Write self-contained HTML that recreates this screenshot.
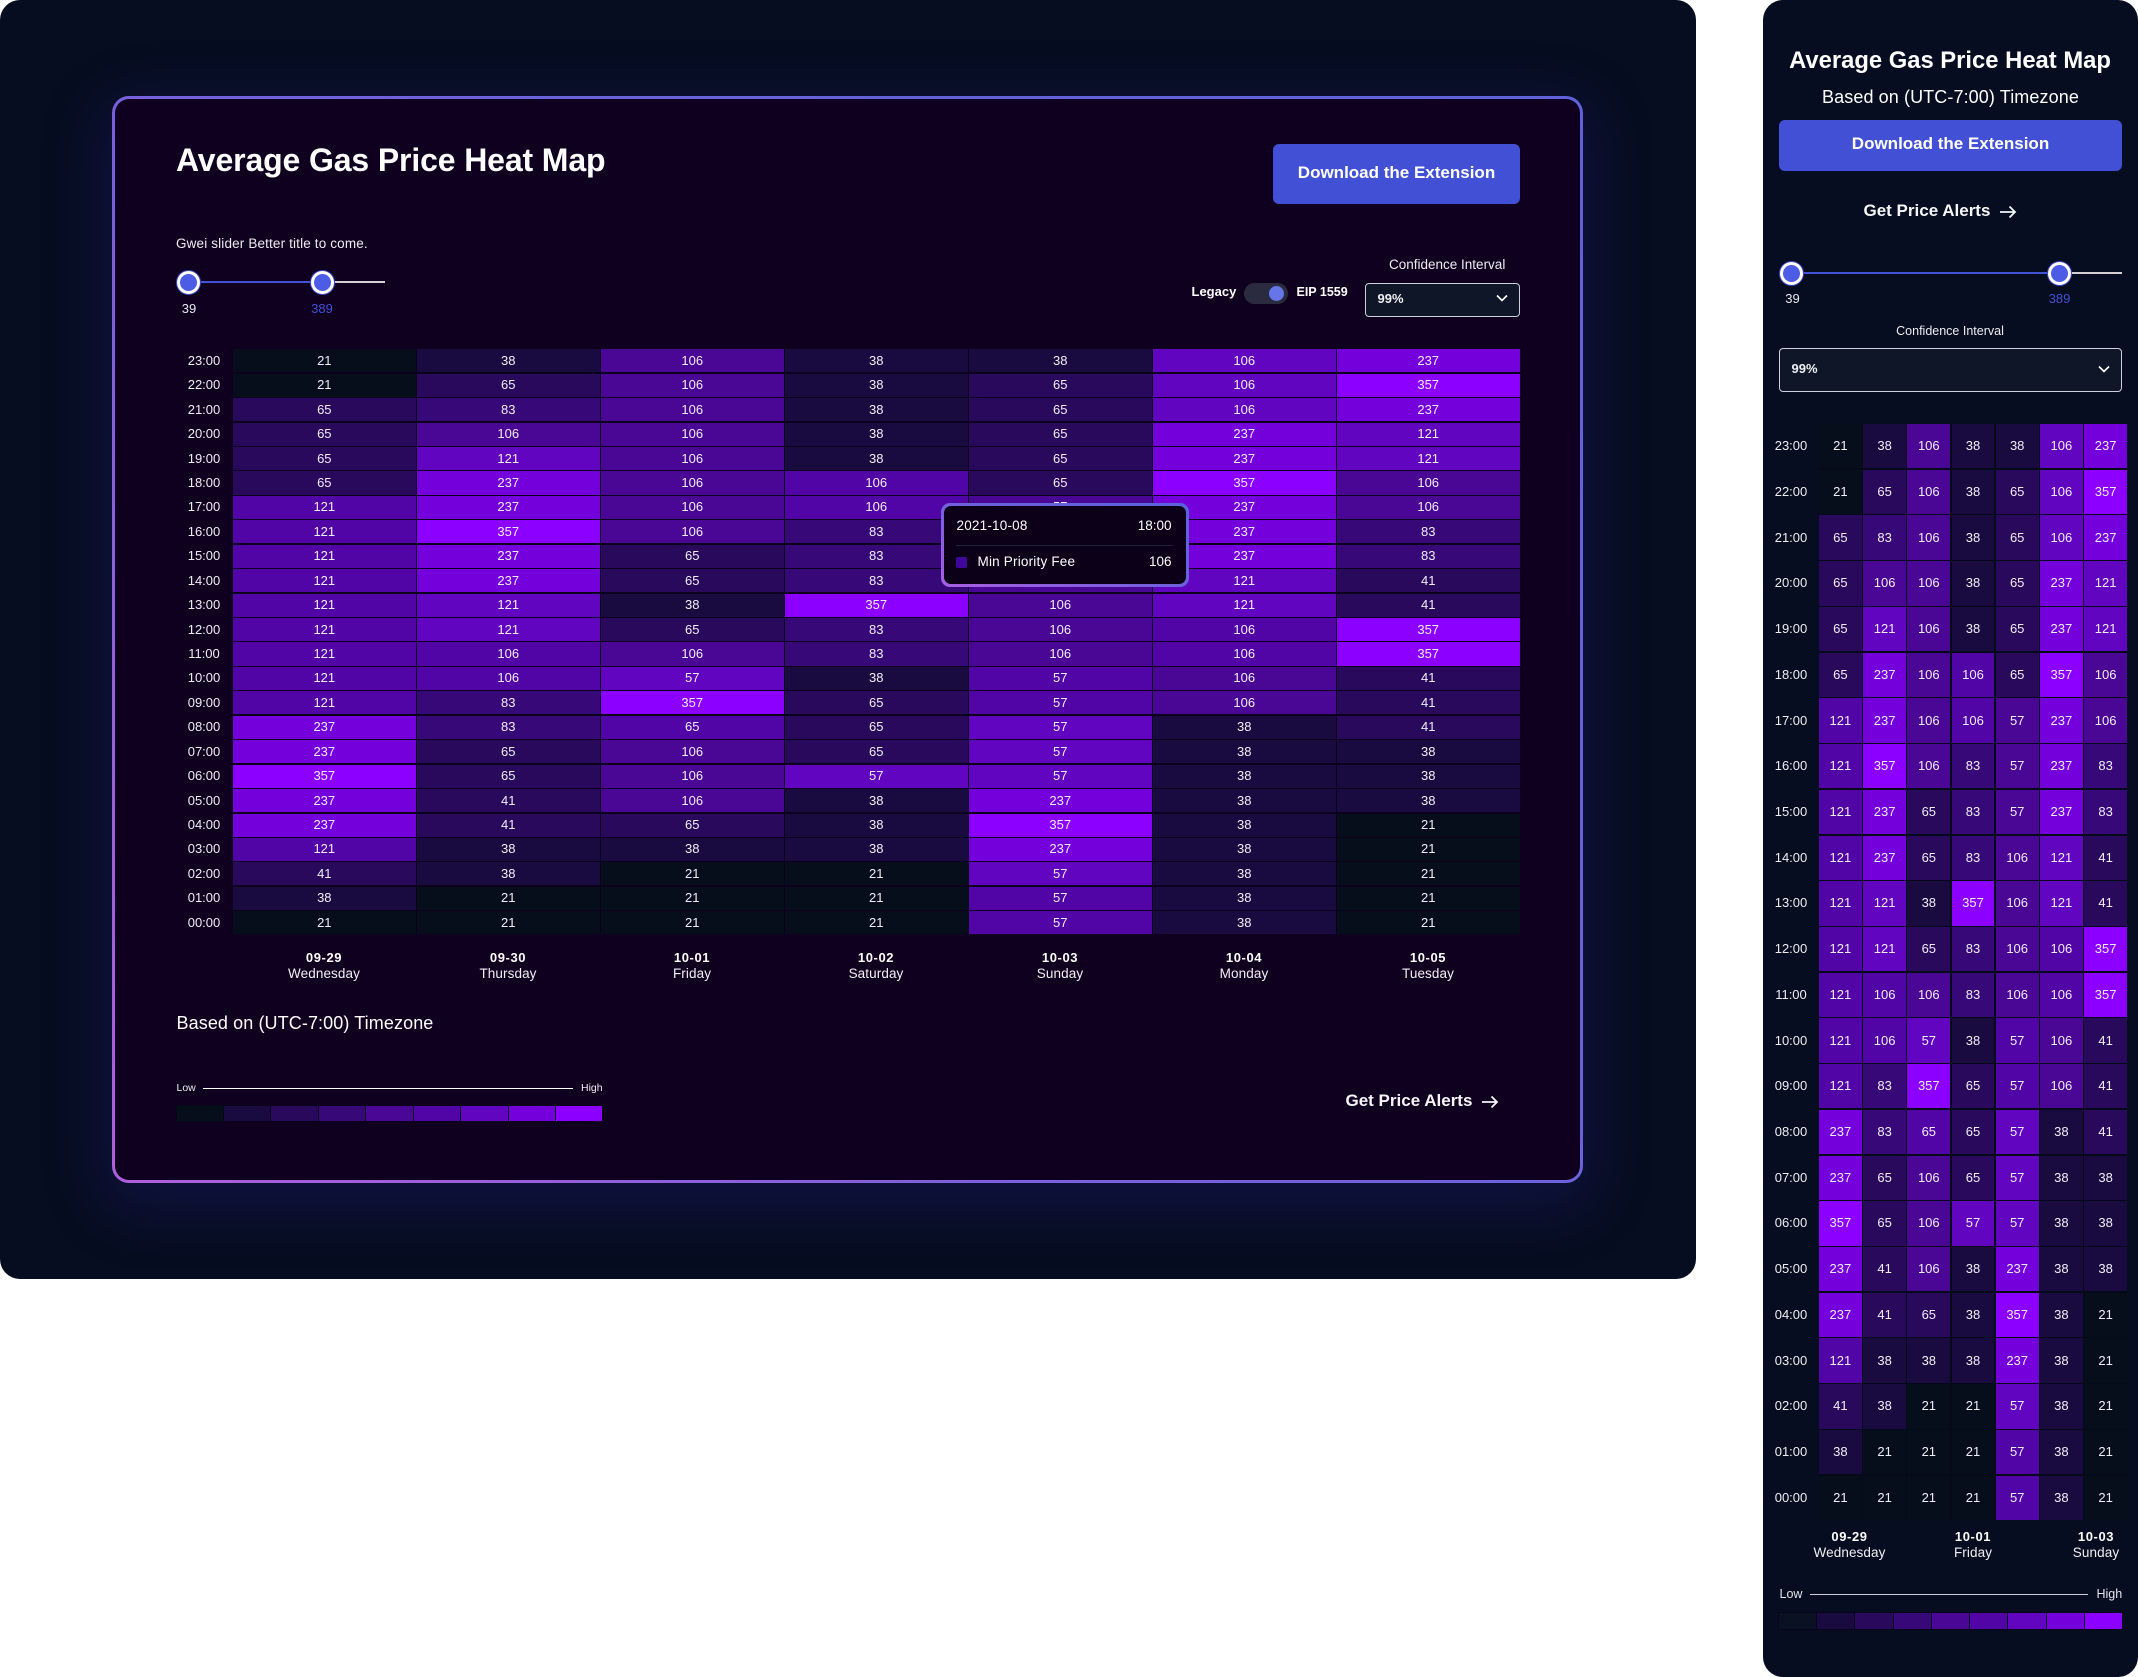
<!DOCTYPE html>
<html><head><meta charset="utf-8"><style>
html,body{margin:0;padding:0;background:#fff;width:2138px;height:1677px;overflow:hidden;font-family:"Liberation Sans",sans-serif;color:#fff}
.abs,.t,.c{position:absolute}
.t{white-space:nowrap;line-height:20px}
.c{white-space:nowrap;line-height:20px;width:400px;text-align:center}
.panel{position:absolute;background:#070d20;overflow:hidden}
.card{position:absolute;left:112px;top:96px;width:1471px;height:1087px;border-radius:17px;background:linear-gradient(45deg,#b05fdc 0%,#7d60dc 35%,#6a62dc 60%,#5f62dc 100%);box-shadow:0 16px 60px 8px rgba(38,34,160,.26)}
.card i{position:absolute;left:3px;top:3px;right:3px;bottom:3px;border-radius:14px;background:#100020;display:block}
.grid{position:absolute;display:grid;grid-template-columns:repeat(7,1fr);grid-template-rows:repeat(24,1fr);gap:1.4px;font-size:13px;background:#0c001c}
.grid b{font-weight:normal;display:flex;align-items:center;justify-content:center;color:#f1eef8;padding-bottom:1px}
.lab{position:absolute;display:grid;grid-template-rows:repeat(24,1fr);gap:1.4px;font-size:13px;text-align:center;color:#eeeef2}
.lab span{display:flex;align-items:center;justify-content:center;padding-bottom:1px}
.a{background:#060e1c}.b{background:#190b40}
b.c{position:static;width:auto;line-height:normal;background:#29095c}
.d{background:#370878}.e{background:#4a0796}.f{background:#5205a6}.g{background:#6105c0}.h{background:#7400dc}.i{background:#8b00ff}
.btn{position:absolute;background:#4250d6;border-radius:6px}
.sel{position:absolute;box-sizing:border-box;border:1.4px solid #ccd0dc;border-radius:4px;background:#0f1628}
.h1{position:absolute;width:23px;height:23px;box-sizing:border-box;border:3.5px solid #fff;border-radius:50%;background:#4c5ce4;box-shadow:0 0 0 1px #3a46c8}
.leg{position:absolute;display:grid;grid-template-columns:repeat(9,1fr);gap:1px;background:#08051a;outline:1px solid #08051a}
.date{font-weight:bold;font-size:13px;letter-spacing:.6px}
.day{font-size:13.5px;letter-spacing:.1px;color:#f0f0f4}
</style></head><body>

<div class="panel" style="left:0;top:0;width:1696px;height:1279px;border-radius:20px">
<div class="card"><i></i></div>
<div class="t" style="left:176px;top:148px;font-size:32px;font-weight:bold;line-height:24px;letter-spacing:-.13px">Average Gas Price Heat Map</div>
<div class="t" style="left:176px;top:234px;font-size:13.5px;letter-spacing:.15px;color:#ececf0">Gwei slider Better title to come.</div>
<div class="abs" style="left:188px;top:281px;width:134px;height:2px;background:#4353d8"></div>
<div class="abs" style="left:322px;top:281px;width:63px;height:2px;background:#d4d0d4"></div>
<div class="h1" style="left:177px;top:270.5px"></div>
<div class="h1" style="left:310.5px;top:270.5px"></div>
<div class="c" style="left:-11px;top:299px;font-size:13px;color:#e8e8ee">39</div>
<div class="c" style="left:122px;top:299px;font-size:13px;color:#4450d6">389</div>

<div class="btn" style="left:1273px;top:144px;width:247px;height:60px"></div>
<div class="c" style="left:1196.5px;top:163px;font-size:17px;font-weight:bold">Download the Extension</div>

<div class="t" style="left:1191.5px;top:282px;font-size:13px;font-weight:bold">Legacy</div>
<div class="abs" style="left:1244px;top:283px;width:44px;height:21px;border-radius:11px;background:#2b2b40"></div>
<div class="abs" style="left:1269px;top:286px;width:15px;height:15px;border-radius:50%;background:#6676e8"></div>
<div class="t" style="left:1296.5px;top:282px;font-size:12.5px;font-weight:bold">EIP 1559</div>
<div class="t" style="left:1389px;top:255px;font-size:13.5px;color:#ececf0">Confidence Interval</div>
<div class="sel" style="left:1365px;top:283px;width:155px;height:34px"></div>
<div class="t" style="left:1377.5px;top:289px;font-size:13px;font-weight:bold;color:#f0f0f4">99%</div>
<svg class="abs" style="left:1495px;top:293px" width="14" height="11" viewBox="0 0 14 11"><path d="M2 2.5 L7 7.5 L12 2.5" fill="none" stroke="#fff" stroke-width="1.6"/></svg>

<div class="lab" style="left:184px;top:349.3px;width:40px;height:585px">
<span>23:00</span><span>22:00</span><span>21:00</span><span>20:00</span><span>19:00</span><span>18:00</span><span>17:00</span><span>16:00</span><span>15:00</span><span>14:00</span><span>13:00</span><span>12:00</span><span>11:00</span><span>10:00</span><span>09:00</span><span>08:00</span><span>07:00</span><span>06:00</span><span>05:00</span><span>04:00</span><span>03:00</span><span>02:00</span><span>01:00</span><span>00:00</span>
</div>
<div class="grid" style="left:233px;top:349.3px;width:1286.5px;height:585px">
<b class=a>21</b><b class=b>38</b><b class=e>106</b><b class=b>38</b><b class=b>38</b><b class=g>106</b><b class=h>237</b>
<b class=a>21</b><b class=c>65</b><b class=e>106</b><b class=b>38</b><b class=c>65</b><b class=g>106</b><b class=i>357</b>
<b class=c>65</b><b class=d>83</b><b class=e>106</b><b class=b>38</b><b class=c>65</b><b class=g>106</b><b class=h>237</b>
<b class=c>65</b><b class=e>106</b><b class=e>106</b><b class=b>38</b><b class=c>65</b><b class=h>237</b><b class=g>121</b>
<b class=c>65</b><b class=g>121</b><b class=e>106</b><b class=b>38</b><b class=c>65</b><b class=h>237</b><b class=g>121</b>
<b class=c>65</b><b class=h>237</b><b class=e>106</b><b class=f>106</b><b class=c>65</b><b class=i>357</b><b class=e>106</b>
<b class=f>121</b><b class=h>237</b><b class=e>106</b><b class=f>106</b><b class=e>57</b><b class=h>237</b><b class=e>106</b>
<b class=f>121</b><b class=i>357</b><b class=e>106</b><b class=d>83</b><b class=e>57</b><b class=h>237</b><b class=d>83</b>
<b class=f>121</b><b class=h>237</b><b class=c>65</b><b class=d>83</b><b class=e>57</b><b class=h>237</b><b class=d>83</b>
<b class=f>121</b><b class=h>237</b><b class=c>65</b><b class=d>83</b><b class=e>106</b><b class=g>121</b><b class=c>41</b>
<b class=f>121</b><b class=g>121</b><b class=b>38</b><b class=i>357</b><b class=e>106</b><b class=g>121</b><b class=c>41</b>
<b class=f>121</b><b class=g>121</b><b class=c>65</b><b class=d>83</b><b class=e>106</b><b class=f>106</b><b class=i>357</b>
<b class=f>121</b><b class=f>106</b><b class=e>106</b><b class=d>83</b><b class=e>106</b><b class=f>106</b><b class=i>357</b>
<b class=f>121</b><b class=f>106</b><b class=g>57</b><b class=b>38</b><b class=f>57</b><b class=e>106</b><b class=c>41</b>
<b class=f>121</b><b class=d>83</b><b class=i>357</b><b class=c>65</b><b class=f>57</b><b class=e>106</b><b class=c>41</b>
<b class=h>237</b><b class=d>83</b><b class=f>65</b><b class=c>65</b><b class=g>57</b><b class=b>38</b><b class=c>41</b>
<b class=h>237</b><b class=c>65</b><b class=e>106</b><b class=c>65</b><b class=g>57</b><b class=b>38</b><b class=b>38</b>
<b class=i>357</b><b class=c>65</b><b class=e>106</b><b class=g>57</b><b class=g>57</b><b class=b>38</b><b class=b>38</b>
<b class=h>237</b><b class=c>41</b><b class=e>106</b><b class=b>38</b><b class=h>237</b><b class=b>38</b><b class=b>38</b>
<b class=h>237</b><b class=c>41</b><b class=c>65</b><b class=b>38</b><b class=i>357</b><b class=b>38</b><b class=a>21</b>
<b class=f>121</b><b class=b>38</b><b class=b>38</b><b class=b>38</b><b class=h>237</b><b class=b>38</b><b class=a>21</b>
<b class=c>41</b><b class=b>38</b><b class=a>21</b><b class=a>21</b><b class=g>57</b><b class=b>38</b><b class=a>21</b>
<b class=b>38</b><b class=a>21</b><b class=a>21</b><b class=a>21</b><b class=f>57</b><b class=b>38</b><b class=a>21</b>
<b class=a>21</b><b class=a>21</b><b class=a>21</b><b class=a>21</b><b class=f>57</b><b class=b>38</b><b class=a>21</b>
</div>

<div class="c date" style="left:124px;top:948px">09-29</div><div class="c day" style="left:124px;top:964px">Wednesday</div>
<div class="c date" style="left:308px;top:948px">09-30</div><div class="c day" style="left:308px;top:964px">Thursday</div>
<div class="c date" style="left:492px;top:948px">10-01</div><div class="c day" style="left:492px;top:964px">Friday</div>
<div class="c date" style="left:676px;top:948px">10-02</div><div class="c day" style="left:676px;top:964px">Saturday</div>
<div class="c date" style="left:860px;top:948px">10-03</div><div class="c day" style="left:860px;top:964px">Sunday</div>
<div class="c date" style="left:1044px;top:948px">10-04</div><div class="c day" style="left:1044px;top:964px">Monday</div>
<div class="c date" style="left:1228px;top:948px">10-05</div><div class="c day" style="left:1228px;top:964px">Tuesday</div>

<div class="abs" style="left:940.5px;top:503px;width:248px;height:84px;border-radius:9px;background:linear-gradient(20deg,#a860e0,#6a60dc 55%,#5a62dc)"></div>
<div class="abs" style="left:943.5px;top:506px;width:242px;height:78px;border-radius:7px;background:#0c0018"></div>
<div class="t" style="left:956.5px;top:516px;font-size:13.5px;letter-spacing:.2px">2021-10-08</div>
<div class="t" style="right:524.5px;top:516px;font-size:13.5px">18:00</div>
<div class="abs" style="left:956px;top:545px;width:217px;height:1px;background:#20243a"></div>
<div class="abs" style="left:956px;top:557px;width:11px;height:11px;border-radius:2px;background:#40089a"></div>
<div class="t" style="left:977.5px;top:552px;font-size:13.5px;letter-spacing:.2px">Min Priority Fee</div>
<div class="t" style="right:524.5px;top:552px;font-size:13.5px">106</div>

<div class="t" style="left:176.5px;top:1013px;font-size:18px;letter-spacing:.1px">Based on (UTC-7:00) Timezone</div>

<div class="t" style="left:176.5px;top:1078px;font-size:10.5px;color:#ececf0">Low</div>
<div class="abs" style="left:203px;top:1088px;width:370px;height:1.4px;background:#fff"></div>
<div class="t" style="left:581px;top:1078px;font-size:10.5px;color:#ececf0">High</div>
<div class="leg" style="left:176.5px;top:1105.5px;width:426px;height:15px"><span class=a></span><span class=b></span><span style="background:#29095c"></span><span class=d></span><span class=e></span><span class=f></span><span class=g></span><span class=h></span><span class=i></span></div>

<div class="t" style="left:1345.5px;top:1090.5px;font-size:17px;font-weight:bold;color:#f6f6f8">Get Price Alerts</div>
<svg class="abs" style="left:1480px;top:1092px" width="20" height="20" viewBox="0 0 20 20"><path d="M2 10 H17 M11.5 4.5 L17 10 L11.5 15.5" fill="none" stroke="#f6f6f8" stroke-width="1.8"/></svg>
</div>

<div class="panel" style="left:1763px;top:0;width:375px;height:1677px;border-radius:20px"></div>
<div class="c" style="left:1750px;top:50px;font-size:23.8px;line-height:22px;font-weight:bold">Average Gas Price Heat Map</div>
<div class="c" style="left:1750.5px;top:87px;font-size:18px;letter-spacing:.1px">Based on (UTC-7:00) Timezone</div>
<div class="btn" style="left:1779px;top:120px;width:343px;height:51px"></div>
<div class="c" style="left:1750.5px;top:134px;font-size:17px;font-weight:bold">Download the Extension</div>
<div class="t" style="left:1863.5px;top:201px;font-size:17px;font-weight:bold;color:#f6f6f8">Get Price Alerts</div>
<svg class="abs" style="left:1998px;top:202px" width="20" height="20" viewBox="0 0 20 20"><path d="M2 10 H17 M11.5 4.5 L17 10 L11.5 15.5" fill="none" stroke="#f6f6f8" stroke-width="1.8"/></svg>

<div class="abs" style="left:1791px;top:272px;width:268px;height:2px;background:#4353d8"></div>
<div class="abs" style="left:2059px;top:272px;width:63px;height:2px;background:#d4d0d4"></div>
<div class="h1" style="left:1780px;top:261.5px"></div>
<div class="h1" style="left:2047.5px;top:261.5px"></div>
<div class="c" style="left:1592.5px;top:289px;font-size:13px;color:#e8e8ee">39</div>
<div class="c" style="left:1859.5px;top:289px;font-size:13px;color:#4450d6">389</div>
<div class="c" style="left:1750px;top:321px;font-size:12.5px;color:#ececf0">Confidence Interval</div>
<div class="sel" style="left:1779px;top:348px;width:343px;height:44px"></div>
<div class="t" style="left:1791.5px;top:358.5px;font-size:13px;font-weight:bold;color:#f0f0f4">99%</div>
<svg class="abs" style="left:2097px;top:364px" width="14" height="11" viewBox="0 0 14 11"><path d="M2 2.5 L7 7.5 L12 2.5" fill="none" stroke="#fff" stroke-width="1.6"/></svg>

<div class="lab" style="left:1771px;top:424px;width:40px;height:1096px">
<span>23:00</span><span>22:00</span><span>21:00</span><span>20:00</span><span>19:00</span><span>18:00</span><span>17:00</span><span>16:00</span><span>15:00</span><span>14:00</span><span>13:00</span><span>12:00</span><span>11:00</span><span>10:00</span><span>09:00</span><span>08:00</span><span>07:00</span><span>06:00</span><span>05:00</span><span>04:00</span><span>03:00</span><span>02:00</span><span>01:00</span><span>00:00</span>
</div>
<div class="grid" style="left:1819px;top:424px;width:308px;height:1096px;background:#050a18">
<b class=a>21</b><b class=b>38</b><b class=e>106</b><b class=b>38</b><b class=b>38</b><b class=g>106</b><b class=h>237</b>
<b class=a>21</b><b class=c>65</b><b class=e>106</b><b class=b>38</b><b class=c>65</b><b class=g>106</b><b class=i>357</b>
<b class=c>65</b><b class=d>83</b><b class=e>106</b><b class=b>38</b><b class=c>65</b><b class=g>106</b><b class=h>237</b>
<b class=c>65</b><b class=e>106</b><b class=e>106</b><b class=b>38</b><b class=c>65</b><b class=h>237</b><b class=g>121</b>
<b class=c>65</b><b class=g>121</b><b class=e>106</b><b class=b>38</b><b class=c>65</b><b class=h>237</b><b class=g>121</b>
<b class=c>65</b><b class=h>237</b><b class=e>106</b><b class=f>106</b><b class=c>65</b><b class=i>357</b><b class=e>106</b>
<b class=f>121</b><b class=h>237</b><b class=e>106</b><b class=f>106</b><b class=e>57</b><b class=h>237</b><b class=e>106</b>
<b class=f>121</b><b class=i>357</b><b class=e>106</b><b class=d>83</b><b class=e>57</b><b class=h>237</b><b class=d>83</b>
<b class=f>121</b><b class=h>237</b><b class=c>65</b><b class=d>83</b><b class=e>57</b><b class=h>237</b><b class=d>83</b>
<b class=f>121</b><b class=h>237</b><b class=c>65</b><b class=d>83</b><b class=e>106</b><b class=g>121</b><b class=c>41</b>
<b class=f>121</b><b class=g>121</b><b class=b>38</b><b class=i>357</b><b class=e>106</b><b class=g>121</b><b class=c>41</b>
<b class=f>121</b><b class=g>121</b><b class=c>65</b><b class=d>83</b><b class=e>106</b><b class=f>106</b><b class=i>357</b>
<b class=f>121</b><b class=f>106</b><b class=e>106</b><b class=d>83</b><b class=e>106</b><b class=f>106</b><b class=i>357</b>
<b class=f>121</b><b class=f>106</b><b class=g>57</b><b class=b>38</b><b class=f>57</b><b class=e>106</b><b class=c>41</b>
<b class=f>121</b><b class=d>83</b><b class=i>357</b><b class=c>65</b><b class=f>57</b><b class=e>106</b><b class=c>41</b>
<b class=h>237</b><b class=d>83</b><b class=f>65</b><b class=c>65</b><b class=g>57</b><b class=b>38</b><b class=c>41</b>
<b class=h>237</b><b class=c>65</b><b class=e>106</b><b class=c>65</b><b class=g>57</b><b class=b>38</b><b class=b>38</b>
<b class=i>357</b><b class=c>65</b><b class=e>106</b><b class=g>57</b><b class=g>57</b><b class=b>38</b><b class=b>38</b>
<b class=h>237</b><b class=c>41</b><b class=e>106</b><b class=b>38</b><b class=h>237</b><b class=b>38</b><b class=b>38</b>
<b class=h>237</b><b class=c>41</b><b class=c>65</b><b class=b>38</b><b class=i>357</b><b class=b>38</b><b class=a>21</b>
<b class=f>121</b><b class=b>38</b><b class=b>38</b><b class=b>38</b><b class=h>237</b><b class=b>38</b><b class=a>21</b>
<b class=c>41</b><b class=b>38</b><b class=a>21</b><b class=a>21</b><b class=g>57</b><b class=b>38</b><b class=a>21</b>
<b class=b>38</b><b class=a>21</b><b class=a>21</b><b class=a>21</b><b class=f>57</b><b class=b>38</b><b class=a>21</b>
<b class=a>21</b><b class=a>21</b><b class=a>21</b><b class=a>21</b><b class=f>57</b><b class=b>38</b><b class=a>21</b>
</div>

<div class="c date" style="left:1649.5px;top:1527px">09-29</div><div class="c day" style="left:1649.5px;top:1543px">Wednesday</div>
<div class="c date" style="left:1773px;top:1527px">10-01</div><div class="c day" style="left:1773px;top:1543px">Friday</div>
<div class="c date" style="left:1896px;top:1527px">10-03</div><div class="c day" style="left:1896px;top:1543px">Sunday</div>

<div class="t" style="left:1779.5px;top:1584px;font-size:12.5px;color:#e4e4ea">Low</div>
<div class="abs" style="left:1810px;top:1594px;width:278px;height:1px;background:#ccd0d8"></div>
<div class="t" style="left:2096.5px;top:1584px;font-size:12.5px;color:#e4e4ea">High</div>
<div class="leg" style="left:1779px;top:1612.5px;width:343px;height:16px"><span style="background:#0a1122"></span><span class=b></span><span style="background:#29095c"></span><span class=d></span><span class=e></span><span class=f></span><span class=g></span><span class=h></span><span class=i></span></div>
</body></html>
